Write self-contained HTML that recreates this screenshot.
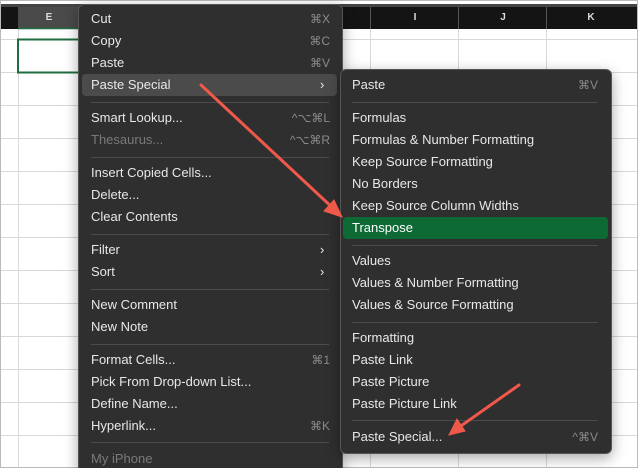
<!DOCTYPE html><html><head><style>
html,body{margin:0;width:638px;height:468px;overflow:hidden}
body{background:#fff;position:relative;font-family:"Liberation Sans",sans-serif}
.a{position:absolute}
.menu{position:absolute;background:#2f2f2f;border:1px solid #555;border-radius:6px;box-shadow:0 4px 14px rgba(0,0,0,.35);box-sizing:border-box}
.it{position:absolute;font-size:13px;color:#e8e8e8;line-height:22px;height:22px;white-space:nowrap}
.sc{position:absolute;font-size:12px;color:#8a8a8a;line-height:22px;text-align:right;white-space:nowrap}
.dis{color:#7a7a7a}
.sep{position:absolute;height:1px;background:#4b4b4b}
</style></head><body>
<div class="a" style="left:1px;top:4px;width:636px;height:3px;background:#444"></div>
<div class="a" style="left:1px;top:7px;width:636px;height:22px;background:#141414"></div>
<div class="a" style="left:18px;top:7px;width:62px;height:22px;background:#4a4a4a;color:#ddd;font-size:10px;font-weight:bold;text-align:center;line-height:22px">E</div>
<div class="a" style="left:370px;top:7px;width:88px;height:22px;color:#ddd;font-size:10px;font-weight:bold;text-align:center;line-height:22px;border-left:1px solid #555">I</div>
<div class="a" style="left:458px;top:7px;width:88px;height:22px;color:#ddd;font-size:10px;font-weight:bold;text-align:center;line-height:22px;border-left:1px solid #555">J</div>
<div class="a" style="left:546px;top:7px;width:88px;height:22px;color:#ddd;font-size:10px;font-weight:bold;text-align:center;line-height:22px;border-left:1px solid #555">K</div>
<svg class="a" style="left:0;top:0" width="638" height="468">
<g stroke="#d8d8d8" stroke-width="1">
<line x1="0" y1="39.5" x2="638" y2="39.5"/><line x1="0" y1="72.5" x2="638" y2="72.5"/><line x1="0" y1="105.5" x2="638" y2="105.5"/><line x1="0" y1="138.5" x2="638" y2="138.5"/>
<line x1="0" y1="171.5" x2="638" y2="171.5"/><line x1="0" y1="204.5" x2="638" y2="204.5"/><line x1="0" y1="237.5" x2="638" y2="237.5"/><line x1="0" y1="270.5" x2="638" y2="270.5"/>
<line x1="0" y1="303.5" x2="638" y2="303.5"/><line x1="0" y1="336.5" x2="638" y2="336.5"/><line x1="0" y1="369.5" x2="638" y2="369.5"/><line x1="0" y1="402.5" x2="638" y2="402.5"/><line x1="0" y1="435.5" x2="638" y2="435.5"/>
<line x1="18.5" y1="29" x2="18.5" y2="468"/><line x1="370.5" y1="29" x2="370.5" y2="468"/><line x1="458.5" y1="29" x2="458.5" y2="468"/><line x1="546.5" y1="29" x2="546.5" y2="468"/>
</g>
<rect x="18" y="39.5" width="62" height="33" fill="none" stroke="#1e6e3e" stroke-width="2"/>
<line x1="18" y1="28.5" x2="80" y2="28.5" stroke="#1e6e3e" stroke-width="1.5"/>
<rect x="0.5" y="0.5" width="637" height="467" fill="none" stroke="#bbb"/>
</svg>
<div class="menu" style="left:78px;top:4px;width:265px;height:470px">
<div class="a" style="left:3px;top:69px;width:255px;height:22px;background:#4b4b4b;border-radius:4px"></div>
</div>
<div class="it" style="left:91px;top:8px">Cut</div><div class="sc" style="left:280px;width:50px;top:8px">⌘X</div>
<div class="it" style="left:91px;top:30px">Copy</div><div class="sc" style="left:280px;width:50px;top:30px">⌘C</div>
<div class="it" style="left:91px;top:52px">Paste</div><div class="sc" style="left:280px;width:50px;top:52px">⌘V</div>
<div class="it" style="left:91px;top:74px">Paste Special</div><div class="it" style="left:320px;top:74px">›</div>
<div class="sep" style="left:91px;top:102px;width:238px"></div>
<div class="it" style="left:91px;top:107px">Smart Lookup...</div><div class="sc" style="left:260px;width:70px;top:107px">^⌥⌘L</div>
<div class="it dis" style="left:91px;top:129px">Thesaurus...</div><div class="sc" style="left:260px;width:70px;top:129px">^⌥⌘R</div>
<div class="sep" style="left:91px;top:157px;width:238px"></div>
<div class="it" style="left:91px;top:162px">Insert Copied Cells...</div>
<div class="it" style="left:91px;top:184px">Delete...</div>
<div class="it" style="left:91px;top:206px">Clear Contents</div>
<div class="sep" style="left:91px;top:234px;width:238px"></div>
<div class="it" style="left:91px;top:239px">Filter</div><div class="it" style="left:320px;top:239px">›</div>
<div class="it" style="left:91px;top:261px">Sort</div><div class="it" style="left:320px;top:261px">›</div>
<div class="sep" style="left:91px;top:289px;width:238px"></div>
<div class="it" style="left:91px;top:294px">New Comment</div>
<div class="it" style="left:91px;top:316px">New Note</div>
<div class="sep" style="left:91px;top:344px;width:238px"></div>
<div class="it" style="left:91px;top:349px">Format Cells...</div><div class="sc" style="left:280px;width:50px;top:349px">⌘1</div>
<div class="it" style="left:91px;top:371px">Pick From Drop-down List...</div>
<div class="it" style="left:91px;top:393px">Define Name...</div>
<div class="it" style="left:91px;top:415px">Hyperlink...</div><div class="sc" style="left:280px;width:50px;top:415px">⌘K</div>
<div class="sep" style="left:91px;top:442px;width:238px"></div>
<div class="it dis" style="left:91px;top:448px">My iPhone</div>
<div class="menu" style="left:340px;top:69px;width:272px;height:385px">
<div class="a" style="left:2px;top:147px;width:265px;height:22px;background:#0d6a35;border-radius:4px"></div>
</div>
<div class="it" style="left:352px;top:74px">Paste</div><div class="sc" style="left:548px;width:50px;top:74px">⌘V</div>
<div class="sep" style="left:352px;top:102px;width:246px"></div>
<div class="it" style="left:352px;top:107px">Formulas</div>
<div class="it" style="left:352px;top:129px">Formulas &amp; Number Formatting</div>
<div class="it" style="left:352px;top:151px">Keep Source Formatting</div>
<div class="it" style="left:352px;top:173px">No Borders</div>
<div class="it" style="left:352px;top:195px">Keep Source Column Widths</div>
<div class="it" style="left:352px;top:217px;color:#fff">Transpose</div>
<div class="sep" style="left:352px;top:245px;width:246px"></div>
<div class="it" style="left:352px;top:250px">Values</div>
<div class="it" style="left:352px;top:272px">Values &amp; Number Formatting</div>
<div class="it" style="left:352px;top:294px">Values &amp; Source Formatting</div>
<div class="sep" style="left:352px;top:322px;width:246px"></div>
<div class="it" style="left:352px;top:327px">Formatting</div>
<div class="it" style="left:352px;top:349px">Paste Link</div>
<div class="it" style="left:352px;top:371px">Paste Picture</div>
<div class="it" style="left:352px;top:393px">Paste Picture Link</div>
<div class="sep" style="left:352px;top:420px;width:246px"></div>
<div class="it" style="left:352px;top:426px">Paste Special...</div><div class="sc" style="left:540px;width:58px;top:426px">^⌘V</div>
<svg class="a" style="left:0;top:0" width="638" height="468">
<g stroke="#f0584a" stroke-width="3" stroke-linecap="round" fill="#f0584a">
<line x1="201" y1="85" x2="335" y2="210"/>
<polygon points="342,217 324,211 334,200" stroke-width="1"/>
<line x1="519" y1="385" x2="458" y2="428"/>
<polygon points="449,435 457,419 465,431" stroke-width="1"/>
</g></svg>
</body></html>
